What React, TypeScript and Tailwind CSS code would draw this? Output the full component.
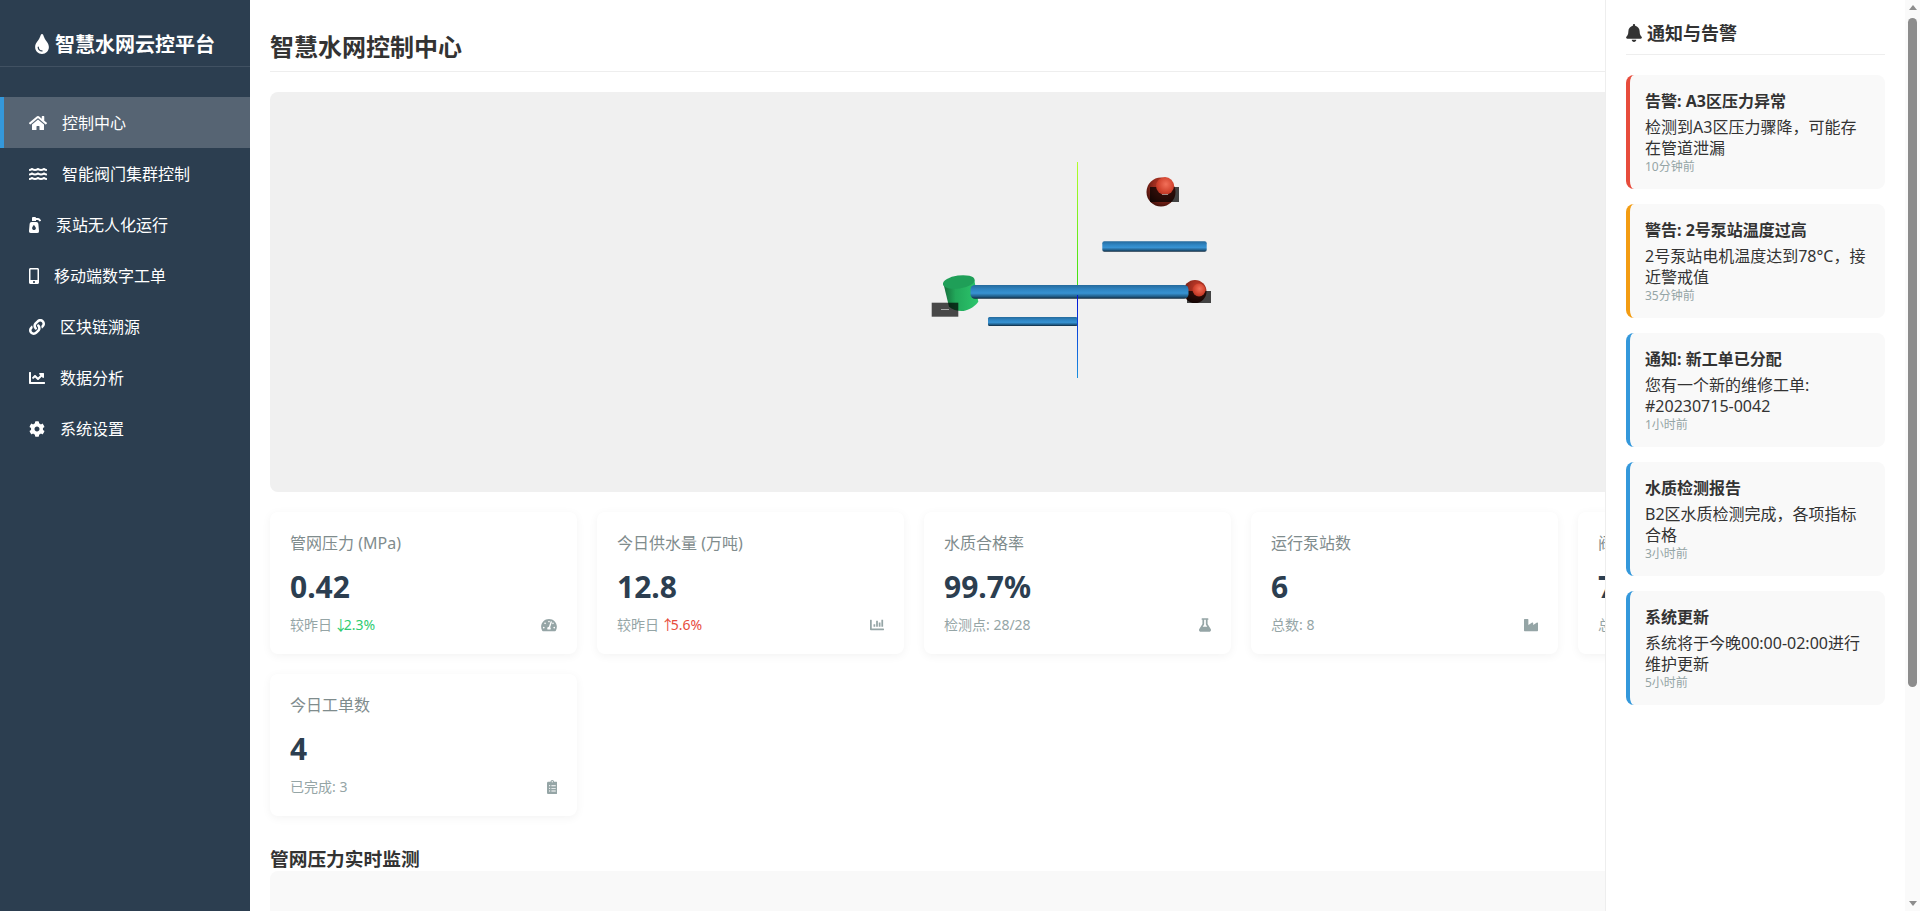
import React from "react";
import { FaHome, FaWater, FaPumpSoap, FaMobileAlt, FaLink, FaChartLine, FaCog, FaTint, FaBell, FaTachometerAlt, FaChartBar, FaFlask, FaIndustry, FaClipboardList, FaCogs } from "react-icons/fa";

const font = "[font-family:'Noto_Sans','Noto_Sans_CJK_SC',sans-serif]";

const nav = [
  { icon: FaHome, w: "w-[18px]", label: "控制中心", active: true },
  { icon: FaWater, w: "w-[18px]", label: "智能阀门集群控制" },
  { icon: FaPumpSoap, w: "w-[12px]", label: "泵站无人化运行" },
  { icon: FaMobileAlt, w: "w-[10px]", label: "移动端数字工单" },
  { icon: FaLink, w: "w-[16px]", label: "区块链溯源" },
  { icon: FaChartLine, w: "w-[16px]", label: "数据分析" },
  { icon: FaCog, w: "w-[16px]", label: "系统设置" },
];

const cards = [
  { title: "管网压力 (MPa)", value: "0.42", pre: "较昨日 ", arrow: "↓", trend: "2.3%", color: "text-[#2ecc71]", icon: FaTachometerAlt, w: "w-[16px]" },
  { title: "今日供水量 (万吨)", value: "12.8", pre: "较昨日 ", arrow: "↑", trend: "5.6%", color: "text-[#e74c3c]", icon: FaChartBar, w: "w-[14px]" },
  { title: "水质合格率", value: "99.7%", pre: "检测点: 28/28", icon: FaFlask, w: "w-[12px]" },
  { title: "运行泵站数", value: "6", pre: "总数: 8", icon: FaIndustry, w: "w-[14px]" },
  { title: "阀门在线数", value: "72", pre: "总数: 76", icon: FaCogs, w: "w-[18px]" },
  { title: "今日工单数", value: "4", pre: "已完成: 3", icon: FaClipboardList, w: "w-[10.5px]" },
];

const notices = [
  { border: "border-l-[#e74c3c]", title: "告警: A3区压力异常", body: "检测到A3区压力骤降，可能存在管道泄漏", time: "10分钟前" },
  { border: "border-l-[#f39c12]", title: "警告: 2号泵站温度过高", body: "2号泵站电机温度达到78°C，接近警戒值", time: "35分钟前" },
  { border: "border-l-[#3498db]", title: "通知: 新工单已分配", body: "您有一个新的维修工单: #20230715-0042", time: "1小时前" },
  { border: "border-l-[#3498db]", title: "水质检测报告", body: "B2区水质检测完成，各项指标合格", time: "3小时前" },
  { border: "border-l-[#3498db]", title: "系统更新", body: "系统将于今晚00:00-02:00进行维护更新", time: "5小时前" },
];

function Scene() {
  return (
    <svg width="341" height="260" viewBox="7 0 341 260" className="shrink-0">
      <defs>
        <linearGradient id="pipe" x1="0" y1="0" x2="0" y2="1">
          <stop offset="0" stopColor="#256a9c" />
          <stop offset="0.35" stopColor="#2f86c4" />
          <stop offset="0.6" stopColor="#3792d2" />
          <stop offset="0.85" stopColor="#1f5a84" />
          <stop offset="1" stopColor="#10283c" />
        </linearGradient>
        <linearGradient id="ya" x1="0" y1="0" x2="0" y2="1">
          <stop offset="0" stopColor="#b4ff2a" />
          <stop offset="1" stopColor="#3ce010" />
        </linearGradient>
        <linearGradient id="za" x1="0" y1="0" x2="0" y2="1">
          <stop offset="0" stopColor="#0010d8" />
          <stop offset="1" stopColor="#1a90e0" />
        </linearGradient>
        <linearGradient id="pump" x1="0" y1="0" x2="1" y2="0">
          <stop offset="0" stopColor="#146c3a" />
          <stop offset="0.35" stopColor="#22a85a" />
          <stop offset="1" stopColor="#2cc56c" />
        </linearGradient>
        <radialGradient id="ball" cx="0.62" cy="0.3" r="0.75">
          <stop offset="0" stopColor="#c83c2a" />
          <stop offset="0.5" stopColor="#9a2c1e" />
          <stop offset="1" stopColor="#3e0f0a" />
        </radialGradient>
        <radialGradient id="glow" cx="0.55" cy="0.4" r="0.6">
          <stop offset="0" stopColor="#f2705a" />
          <stop offset="0.7" stopColor="#d2442f" />
          <stop offset="1" stopColor="#b83625" />
        </radialGradient>
      </defs>
      <rect x="177" y="22" width="1" height="124" fill="url(#ya)" />
      <circle cx="261" cy="52" r="14.5" fill="url(#ball)" />
      <rect x="250" y="47" width="29" height="15" fill="#000" fillOpacity="0.72" />
      <circle cx="265" cy="46" r="9" fill="url(#glow)" />
      <rect x="262" y="54" width="6" height="1" fill="#a08a86" />
      <rect x="202.3" y="101.3" width="104.4" height="10.4" rx="2" fill="url(#pipe)" />
      <circle cx="295" cy="151.5" r="11.5" fill="url(#ball)" />
      <rect x="287" y="151" width="24" height="12" fill="#000" fillOpacity="0.72" />
      <circle cx="299" cy="150" r="6.5" fill="url(#glow)" />
      <rect x="88" y="177" width="89.5" height="9" rx="1.5" fill="url(#pipe)" />
      <path d="M43.3 143 L74.3 140 L78.3 161.7 C74 168 66 171 61.7 171 C57 171 52 169.5 49 166.7 Z" fill="url(#pump)" />
      <ellipse cx="58.8" cy="142" rx="16" ry="6.5" transform="rotate(-8 58.8 142)" fill="#1f9f58" />
      <rect x="31.7" y="162.7" width="26.6" height="14" fill="#000" fillOpacity="0.7" />
      <rect x="41" y="169" width="8" height="1" fill="#aaa" />
      <rect x="70.5" y="145" width="218" height="13.7" rx="4.5" fill="url(#pipe)" />
      <rect x="177" y="155" width="1" height="83" fill="url(#za)" />
    </svg>
  );
}

export default function App() {
  return (
    <div className={`relative flex h-[911px] w-full overflow-hidden bg-white text-[#333] ${font}`}>
      <aside className="w-[250px] shrink-0 bg-[#2c3e50] text-white">
        <div className="flex h-[67px] items-center justify-center border-b border-white/10 pt-[22px] text-[20px] font-bold leading-[27px]">
          <FaTint className="mr-[6px] h-[20px] w-[14px]" />
          智慧水网云控平台
        </div>
        <nav className="mt-[30px]">
          {nav.map((n) => (
            <div key={n.label} className={`flex h-[51px] items-center border-l-4 pl-[25px] text-[16px] ${n.active ? "border-[#3498db] bg-white/20" : "border-transparent"}`}>
              <n.icon className={`mr-[15px] h-[16px] shrink-0 ${n.w}`} />
              {n.label}
            </div>
          ))}
        </nav>
      </aside>

      <main className="min-w-0 flex-1 overflow-hidden p-5">
        <h1 className="mb-5 h-[52px] border-b border-[#eee] pt-[11px] text-[24px] font-bold leading-[32px]">智慧水网控制中心</h1>
        <div className="flex h-[400px] justify-center overflow-hidden rounded-lg bg-[#f0f0f0] pt-[48px]">
          <Scene />
        </div>
        <div className="mt-5 grid grid-cols-5 gap-5">
          {cards.map((c) => (
            <div key={c.title} className="h-[142px] rounded-lg bg-white p-5 shadow-[0_2px_10px_rgba(0,0,0,0.05)]">
              <div className="mt-px text-[16px] leading-[21px] text-[#7f8c8d]">{c.title}</div>
              <div className="mt-3 text-[30px] font-bold leading-[42px] text-[#2c3e50]">{c.value}</div>
              <div className="mt-[7px] flex items-center justify-between text-[14px] leading-[19px] text-[#95a5a6]">
                <span>
                  {c.pre}
                  {c.trend && (
                    <span className={c.color}>
                      <span className="ml-[-2px] mr-[-4px]">{c.arrow}</span>
                      {c.trend}
                    </span>
                  )}
                </span>
                <c.icon className={`h-[14px] ${c.w}`} />
              </div>
            </div>
          ))}
        </div>
        <h2 className="mt-[31px] text-[18.72px] font-bold leading-[24px]">管网压力实时监测</h2>
        <div className="h-[300px] rounded-lg bg-[#f9f9f9]" />
      </main>

      <div className="flex w-[15px] shrink-0 flex-col items-center bg-[#fafafa]">
        <div className="mt-[5px] h-0 w-0 border-x-[4.5px] border-b-[5px] border-x-transparent border-b-[#8c8c8c]" />
        <div className="mt-[8px] h-[669px] w-[9px] rounded-full bg-[#8c8c8c]" />
        <div className="mt-auto mb-[5px] h-0 w-0 border-x-[4.5px] border-t-[5px] border-x-transparent border-t-[#8c8c8c]" />
      </div>

      <aside className="absolute bottom-0 right-[15px] top-0 w-[300px] border-l border-[#eee] bg-white p-5">
        <h3 className="flex h-[35px] items-start border-b border-[#eee] pt-px text-[18px] font-bold leading-[24px]">
          <FaBell className="mr-[5px] mt-[3px] h-[18px] w-[16px]" />
          通知与告警
        </h3>
        <div className="mt-5 flex flex-col gap-[15px]">
          {notices.map((n) => (
            <div key={n.title} className={`rounded-lg border-l-4 bg-[#f9f9f9] px-[15px] pb-[14px] pt-4 ${n.border}`}>
              <div className="mb-[5px] text-[16px] font-bold leading-[21px]">{n.title}</div>
              <div className="text-[16px] leading-[21px]">{n.body}</div>
              <div className="text-[12px] leading-[16px] text-[#95a5a6]">{n.time}</div>
            </div>
          ))}
        </div>
      </aside>
    </div>
  );
}
